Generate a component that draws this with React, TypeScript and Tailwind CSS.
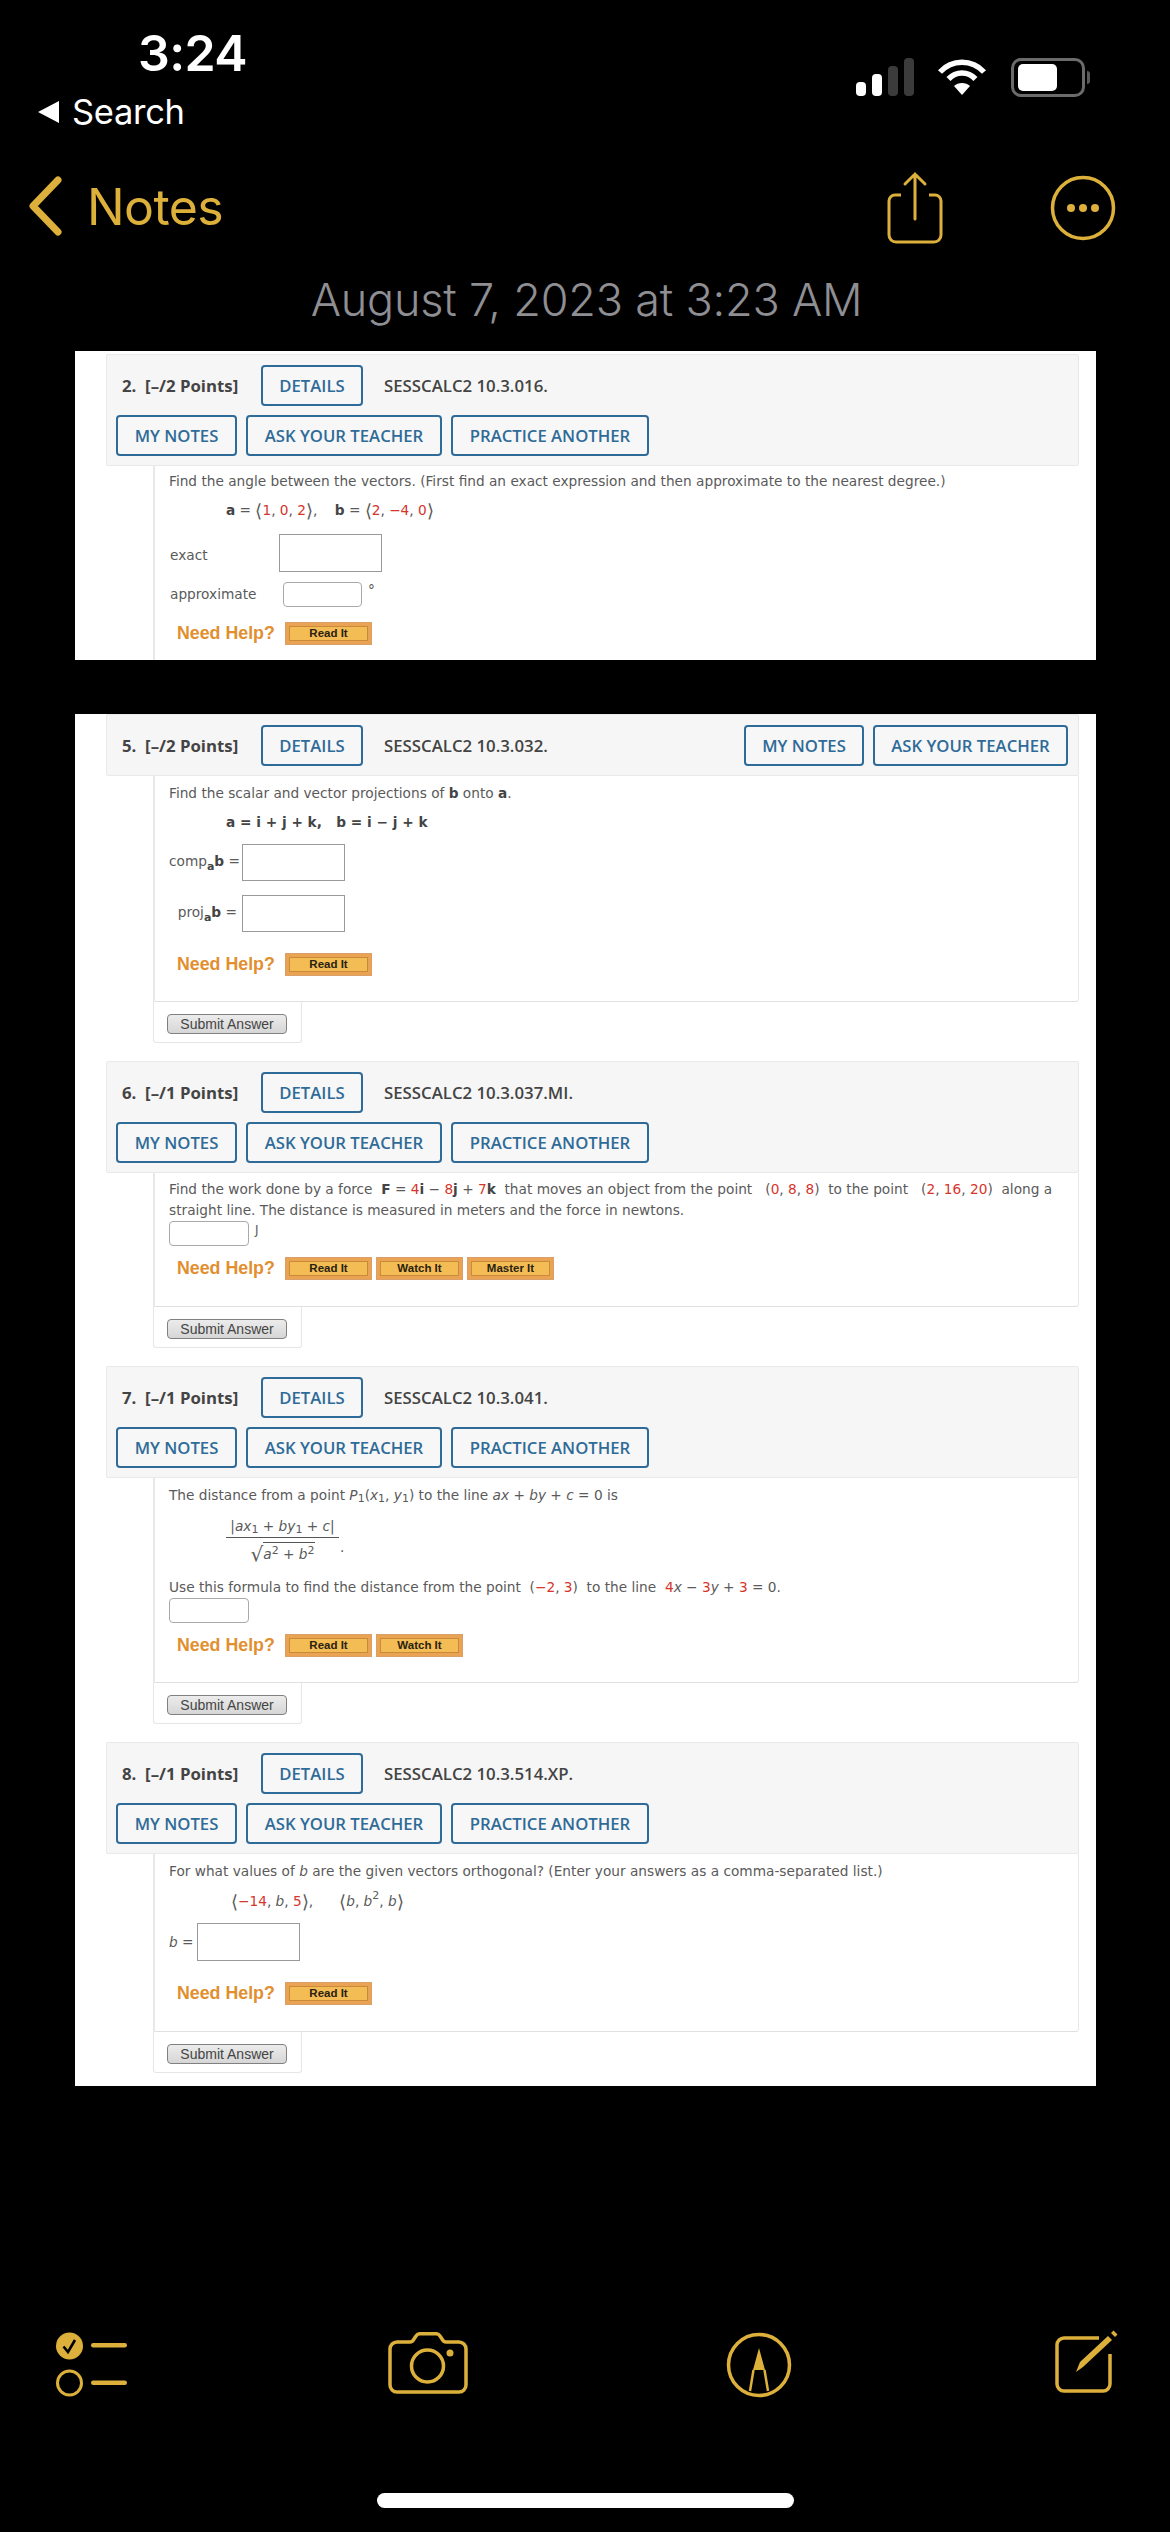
import React from "react";

const GOLD = "#dcb03a";

function NavBtn({ w, children }: { w: string; children: React.ReactNode }) {
  return (
    <div className={`${w} h-[41px] shrink-0 flex items-center justify-center border-2 border-[#2f6b98] rounded-[4px] text-[#2f6b98] text-[16.7px] font-semibold bg-[#f7f7f7] font-['Open_Sans',sans-serif] whitespace-nowrap`}>
      {children}
    </div>
  );
}

function Header({ n, pts, code, side }: { n: number; pts: number; code: string; side?: boolean }) {
  return (
    <div className="bg-[#f6f6f6] border border-[#e9e9e9] rounded-[2px] pt-[10px] pb-[9px] font-['Open_Sans',sans-serif]">
      <div className="flex items-center h-[41px] pr-[10px]">
        <div className="w-[154px] pl-[15px] text-[16.8px] font-bold text-[#444444] whitespace-pre">{`${n}.  [–/${pts} Points]`}</div>
        <NavBtn w="w-[102px]">DETAILS</NavBtn>
        <div className="ml-[21px] text-[16.8px] font-semibold text-[#444444] whitespace-nowrap">{code}</div>
        {side && (
          <div className="ml-auto flex gap-[9px]">
            <NavBtn w="w-[120px]">MY NOTES</NavBtn>
            <NavBtn w="w-[195px]">ASK YOUR TEACHER</NavBtn>
          </div>
        )}
      </div>
      {!side && (
        <div className="flex gap-[9px] mt-[9px] ml-[9px]">
          <NavBtn w="w-[121px]">MY NOTES</NavBtn>
          <NavBtn w="w-[196px]">ASK YOUR TEACHER</NavBtn>
          <NavBtn w="w-[198px]">PRACTICE ANOTHER</NavBtn>
        </div>
      )}
    </div>
  );
}

function R({ children }: { children: React.ReactNode }) {
  return <span className="text-[#d5352b]">{children}</span>;
}

function B({ children }: { children: React.ReactNode }) {
  return <b className="font-bold text-[#444444]">{children}</b>;
}

function I({ children }: { children: React.ReactNode }) {
  return <i className="italic">{children}</i>;
}

function A({ children }: { children: React.ReactNode }) {
  return <span className="text-[18px] leading-none font-light">{children}</span>;
}

function Line({ children, className = "" }: { children: React.ReactNode; className?: string }) {
  return <div className={`h-[21px] flex items-center whitespace-pre ${className}`}>{children}</div>;
}

function Help({ items, className = "" }: { items: string[]; className?: string }) {
  return (
    <div className={`flex items-center h-[23px] ${className}`}>
      <div className="w-[116px] pl-[8px] text-[17.8px] leading-none font-bold text-[#e18f2f] font-['Liberation_Sans',sans-serif] whitespace-nowrap">Need Help?</div>
      <div className="flex gap-[4px]">
        {items.map((t) => (
          <div key={t} className="w-[87px] h-[23px] bg-[#eaa352] border border-[#d9a06a] px-[3px] py-[3px]">
            <div className="h-full bg-[#f3bc55] border border-[#c98a3a] flex items-center justify-center text-[11.5px] font-bold text-[#2a2210] font-['Liberation_Sans',sans-serif]">{t}</div>
          </div>
        ))}
      </div>
    </div>
  );
}

function Submit() {
  return (
    <div className="ml-[47px] w-[149px] h-[41px] border-x border-b border-[#e6e6e6] rounded-b-[3px] pl-[13px] pt-[12px] bg-white">
      <div className="w-[120px] h-[20px] flex items-center justify-center rounded-[4px] border border-[#808080] bg-linear-to-b from-[#ececec] to-[#d6d6d6] text-[14px] text-[#444444] font-['Liberation_Sans',sans-serif]">Submit Answer</div>
    </div>
  );
}

function Body({ children, className = "" }: { children: React.ReactNode; className?: string }) {
  return (
    <div className={`ml-[47px] border-l-2 border-[#e8e8e8] pl-[14px] text-[13.7px] text-[#5a5a5a] font-['DejaVu_Sans',sans-serif] ${className}`}>
      {children}
    </div>
  );
}

function Box({ w, h, round }: { w: string; h: string; round?: boolean }) {
  return <div className={`${w} ${h} shrink-0 bg-white border ${round ? "rounded-[4px] border-[#a9a9a9]" : "border-[#9a9a9a]"}`} />;
}

function Sub({ children, bold }: { children: React.ReactNode; bold?: boolean }) {
  return <span className={`text-[11px] relative top-[4px] ${bold ? "font-bold text-[#444444]" : ""}`}>{children}</span>;
}

function Sup({ children }: { children: React.ReactNode }) {
  return <span className="text-[11px] relative top-[-5px]">{children}</span>;
}

function Share() {
  return (
    <svg width="58" height="74" viewBox="0 0 58 74" fill="none" stroke={GOLD} strokeWidth="3">
      <path d="M15 24H9a6 6 0 0 0-6 6v34a7 7 0 0 0 7 7h38a7 7 0 0 0 7-7V30a6 6 0 0 0-6-6h-6" />
      <path d="M29 48V3M19 13 29 3l10 10" strokeLinecap="round" />
    </svg>
  );
}

function More() {
  return (
    <svg width="66" height="66" viewBox="0 0 66 66" fill="none">
      <circle cx="33" cy="33" r="30.5" stroke={GOLD} strokeWidth="3.5" />
      <circle cx="21" cy="33" r="4" fill={GOLD} />
      <circle cx="33" cy="33" r="4" fill={GOLD} />
      <circle cx="45" cy="33" r="4" fill={GOLD} />
    </svg>
  );
}

function Checklist() {
  return (
    <svg width="71" height="66" viewBox="0 0 71 66" fill="none">
      <circle cx="13.5" cy="14" r="13.5" fill={GOLD} />
      <path d="M7.5 14.5 12 20l7-12" stroke="#000" strokeWidth="2.6" />
      <circle cx="13.5" cy="51" r="12" stroke={GOLD} strokeWidth="3" />
      <rect x="35" y="11" width="36" height="4.5" rx="2.2" fill={GOLD} />
      <rect x="35" y="48.5" width="36" height="4.5" rx="2.2" fill={GOLD} />
    </svg>
  );
}

function Camera() {
  return (
    <svg width="80" height="62" viewBox="0 0 80 62" fill="none" stroke={GOLD} strokeWidth="3.5">
      <path d="M9 10h13c2 0 3-1 4-3l2-3c1-1.600 2-2.300 4-2.300h16c2 0 3 .7 4 2.300l2 3c1 2 2 3 4 3h13a7 7 0 0 1 7 7v36a7 7 0 0 1-7 7H9a7 7 0 0 1-7-7V17a7 7 0 0 1 7-7Z" />
      <circle cx="39.500" cy="34" r="16" />
      <circle cx="62" cy="21" r="3.500" fill={GOLD} stroke="none" />
    </svg>
  );
}

function Markup() {
  return (
    <svg width="66" height="66" viewBox="0 0 66 66" fill="none">
      <circle cx="33" cy="33" r="30.500" stroke={GOLD} strokeWidth="3.500" />
      <path d="M33 16 39 38H27Z" fill={GOLD} />
      <path d="M27.500 38 24 59M38.500 38l3.500 21" stroke={GOLD} strokeWidth="2.500" />
    </svg>
  );
}

function Compose() {
  return (
    <svg width="63" height="64" viewBox="0 0 63 64" fill="none">
      <path d="M44 8H9a7 7 0 0 0-7 7v39a7 7 0 0 0 7 7h39a7 7 0 0 0 7-7V24" stroke={GOLD} strokeWidth="3.500" />
      <path d="M21 42 25 32 53 6l4 4-29 27Z" fill={GOLD} />
      <path d="m56 3 2.500-2.500 4 4L60 7Z" fill={GOLD} />
    </svg>
  );
}

function Wifi() {
  return (
    <svg width="50" height="38" viewBox="0 0 50 38" fill="none" stroke="#fff" strokeWidth="5.500">
      <path d="M3 14C15 1 35 1 47 14" />
      <path d="M11.500 21C19 13 31 13 38.500 21" />
      <path d="M25 37 17 28C21 24 29 24 33 28Z" fill="#fff" stroke="none" />
    </svg>
  );
}

function Signal() {
  return (
    <svg width="59" height="38" viewBox="0 0 59 38">
      <rect x="1" y="24" width="10" height="14" rx="4" fill="#fff" />
      <rect x="17" y="16" width="10" height="22" rx="4" fill="#fff" />
      <rect x="33" y="8" width="10" height="30" rx="4" fill="#3b3b3b" />
      <rect x="49" y="0" width="10" height="38" rx="4" fill="#3b3b3b" />
    </svg>
  );
}

export default function App() {
  return (
    <div className="w-[1170px] h-[2532px] bg-black overflow-hidden font-['Inter',sans-serif]">
      {/* status */}
      <div className="h-[169px] flex justify-between">
        <div>
          <div className="mt-[28px] ml-[138px] h-[50px] leading-[50px] text-[50px] font-semibold text-white tracking-[-0.6px]">3:24</div>
          <div className="mt-[14px] h-[40px] flex items-center pl-[38px]">
            <div className="w-0 h-0 border-y-[11px] border-y-transparent border-r-[21px] border-r-white" />
            <div className="ml-[13px] text-[34.5px] text-white tracking-[-0.3px]">Search</div>
          </div>
        </div>
        <div className="pt-[58px] pr-[80px] flex items-start">
          <Signal />
          <div className="ml-[23px]"><Wifi /></div>
          <div className="ml-[24px] flex items-center h-[39px]">
            <div className="w-[74px] h-[39px] rounded-[10px] border-[3px] border-[#6b6b6b] pl-[4px] py-[3px]">
              <div className="w-[39px] h-full bg-white rounded-[5px]" />
            </div>
            <div className="ml-[2px] w-[3px] h-[13px] bg-[#5a5a5a] rounded-r-full" />
          </div>
        </div>
      </div>
      {/* nav */}
      <div className="h-[74px] flex items-center">
        <svg className="ml-[27px]" width="36" height="60" viewBox="0 0 36 60" fill="none">
          <path d="M31 4 6 30l25 26" stroke={GOLD} strokeWidth="7" strokeLinecap="round" strokeLinejoin="round" />
        </svg>
        <div className="ml-[24px] mt-[2px] text-[50px] tracking-[-0.6px] text-[#dcb03a]">Notes</div>
        <div className="ml-auto mr-[54px] mt-[3px] flex items-center">
          <Share />
          <div className="ml-[106px] mt-[1px]"><More /></div>
        </div>
      </div>
      {/* date */}
      <div className="h-[108px] flex items-center justify-center pt-[6px] pl-[3px] text-[45px] font-light tracking-[-0.2px] text-[#8e8e93]">August 7, 2023 at 3:23 AM</div>

      {/* sheet 1 */}
      <div className="ml-[75px] w-[1021px] h-[309px] bg-white pt-[3px] pl-[31px] pr-[17px]">
        <Header n={2} pts={2} code="SESSCALC2 10.3.016." />
        <Body className="h-[194px] pt-[5px]">
          <Line>Find the angle between the vectors. (First find an exact expression and then approximate to the nearest degree.)</Line>
          <Line className="mt-[8px] pl-[57px]"><B>a</B>{" = "}<A>⟨</A><R>1</R>{", "}<R>0</R>{", "}<R>2</R><A>⟩</A>{",    "}<B>b</B>{" = "}<A>⟨</A><R>2</R>{", "}<R>−4</R>{", "}<R>0</R><A>⟩</A></Line>
          <div className="mt-[13px] flex items-center">
            <div className="w-[110px] pl-[1px] mt-[4px]">exact</div>
            <Box w="w-[103px]" h="h-[38px]" />
          </div>
          <div className="mt-[10px] flex items-center">
            <div className="w-[114px] pl-[1px]">approximate</div>
            <Box w="w-[79px]" h="h-[25px]" round />
            <div className="ml-[6px] -mt-[8px]">°</div>
          </div>
          <Help className="mt-[15px]" items={["Read It"]} />
        </Body>
      </div>

      {/* sheet 2 */}
      <div className="mt-[54px] ml-[75px] w-[1021px] h-[1372px] bg-white pl-[31px] pr-[17px]">
        <Header n={5} pts={2} code="SESSCALC2 10.3.032." side />
        <Body className="h-[226px] pt-[7px] border-r border-b border-r-[#e8e8e8] border-b-[#e0e0e0] rounded-br-[3px]">
          <Line>Find the scalar and vector projections of <B>b</B> onto <B>a</B>.</Line>
          <Line className="mt-[8px] pl-[57px]"><B>a = i + j + k,   b = i − j + k</B></Line>
          <div className="mt-[11px] flex items-center">
            <div className="w-[73px] text-right pr-[5px] -mt-[2px] whitespace-pre">comp<Sub bold>a</Sub><B>b</B> =</div>
            <Box w="w-[103px]" h="h-[37px]" />
          </div>
          <div className="mt-[14px] flex items-center">
            <div className="w-[73px] text-right pr-[5px] -mt-[2px] whitespace-pre">proj<Sub bold>a</Sub><B>b</B> =</div>
            <Box w="w-[103px]" h="h-[37px]" />
          </div>
          <Help className="mt-[21px]" items={["Read It"]} />
        </Body>
        <Submit />

        <div className="h-[18px]" />
        <Header n={6} pts={1} code="SESSCALC2 10.3.037.MI." />
        <Body className="h-[134px] pt-[6px] border-r border-b border-r-[#e8e8e8] border-b-[#e0e0e0] rounded-br-[3px]">
          <Line>Find the work done by a force  <B>F</B> = <R>4</R><B>i</B> − <R>8</R><B>j</B> + <R>7</R><B>k</B>  that moves an object from the point   (<R>0</R>, <R>8</R>, <R>8</R>)  to the point   (<R>2</R>, <R>16</R>, <R>20</R>)  along a</Line>
          <Line>straight line. The distance is measured in meters and the force in newtons.</Line>
          <div className="flex items-center">
            <Box w="w-[80px]" h="h-[25px]" round />
            <div className="ml-[6px] -mt-[8px] text-[12px]">J</div>
          </div>
          <Help className="mt-[11px]" items={["Read It", "Watch It", "Master It"]} />
        </Body>
        <Submit />

        <div className="h-[18px]" />
        <Header n={7} pts={1} code="SESSCALC2 10.3.041." />
        <Body className="h-[205px] pt-[7px] border-r border-b border-r-[#e8e8e8] border-b-[#e0e0e0] rounded-br-[3px]">
          <Line>The distance from a point <I>P</I><Sub>1</Sub>(<I>x</I><Sub>1</Sub>, <I>y</I><Sub>1</Sub>) to the line <I>ax</I> + <I>by</I> + <I>c</I> = 0 is</Line>
          <div className="mt-[10px] ml-[57px] flex items-center h-[52px]">
            <div className="w-[113px] flex flex-col items-center">
              <div className="h-[21px] whitespace-pre flex items-center border-b-0">|<I>ax</I><Sub>1</Sub> + <I>by</I><Sub>1</Sub> + <I>c</I>|</div>
              <div className="w-full h-[1px] bg-[#555555]" />
              <div className="h-[30px] flex items-center whitespace-pre mt-[1px]"><span className="text-[20px] leading-none">√</span><span className="border-t border-[#555555] pt-[2px] leading-[18px]"><I>a</I><Sup>2</Sup> + <I>b</I><Sup>2</Sup></span></div>
            </div>
            <div className="mt-[10px] ml-[1px]">.</div>
          </div>
          <Line className="mt-[9px]">Use this formula to find the distance from the point  (<R>−2</R>, <R>3</R>)  to the line  <R>4</R><I>x</I> − <R>3</R><I>y</I> + <R>3</R> = 0.</Line>
          <div className="mt-[0px]"><Box w="w-[80px]" h="h-[25px]" round /></div>
          <Help className="mt-[11px]" items={["Read It", "Watch It"]} />
        </Body>
        <Submit />

        <div className="h-[18px]" />
        <Header n={8} pts={1} code="SESSCALC2 10.3.514.XP." />
        <Body className="h-[178px] pt-[7px] border-r border-b border-r-[#e8e8e8] border-b-[#e0e0e0] rounded-br-[3px]">
          <Line>For what values of <I>b</I> are the given vectors orthogonal? (Enter your answers as a comma-separated list.)</Line>
          <Line className="mt-[9px] pl-[62px]"><A>⟨</A><R>−14</R>, <I>b</I>, <R>5</R><A>⟩</A>{",      "}<A>⟨</A><I>b</I>, <I>b</I><Sup>2</Sup>, <I>b</I><A>⟩</A></Line>
          <div className="mt-[11px] flex items-center">
            <div className="w-[28px] whitespace-pre"><I>b</I> =</div>
            <Box w="w-[103px]" h="h-[38px]" />
          </div>
          <Help className="mt-[21px]" items={["Read It"]} />
        </Body>
        <Submit />
      </div>

      {/* toolbar */}
      <div className="mt-[246px] pl-[56px] flex items-start">
        <Checklist />
        <div className="ml-[261px]"><Camera /></div>
        <div className="ml-[258px]"><Markup /></div>
        <div className="ml-[263px] -mt-[2px]"><Compose /></div>
      </div>
      <div className="mt-[95px] mx-auto w-[417px] h-[15px] rounded-full bg-white" />
    </div>
  );
}
